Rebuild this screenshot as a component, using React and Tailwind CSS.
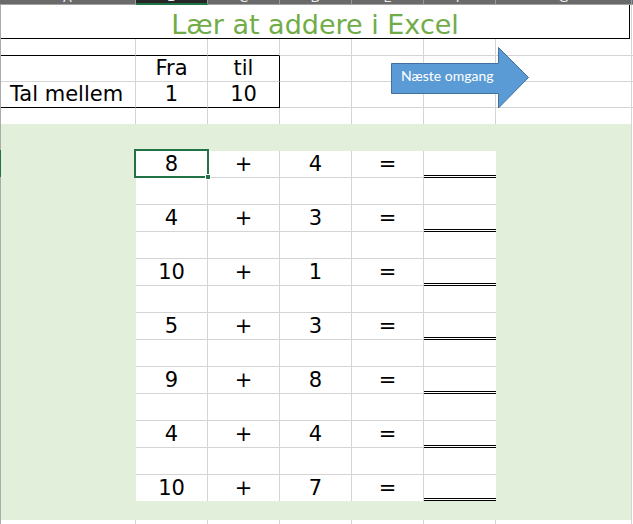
const problems = [
  [8, 4],
  [4, 3],
  [10, 1],
  [5, 3],
  [9, 8],
  [4, 4],
  [10, 7],
];

const headerCols = [
  { letter: 'A', width: 'w-[136px]' },
  { letter: 'B', width: 'w-[72px]', active: true },
  { letter: 'C', width: 'w-[72px]' },
  { letter: 'D', width: 'w-[72px]' },
  { letter: 'E', width: 'w-[72px]' },
  { letter: 'F', width: 'w-[72px]' },
  { letter: 'G', width: 'w-[136px]' },
];

function ColumnHeader() {
  return (
    <div className="flex h-[5px] overflow-hidden bg-[#6a6a6a]">
      {headerCols.map((c) => (
        <div
          key={c.letter}
          className={`flex shrink-0 items-end justify-center overflow-hidden border-r border-[#999] ${c.width} ${
            c.active ? 'border-b-2 border-b-[#217346] bg-[#262626]' : 'border-b border-b-[#a3a3a3]'
          }`}
        >
          <span className="text-[13px] leading-none text-[#ececec]">{c.letter}</span>
        </div>
      ))}
      <div className="flex flex-1 items-end justify-center border-b border-b-[#a3a3a3]">
        <span className="text-[13px] leading-none text-[#ececec]">H</span>
      </div>
    </div>
  );
}

// one spreadsheet cell, text sits on the bottom like Excel
function Cell({ children, className = '' }) {
  return (
    <div className={`flex shrink-0 items-end justify-center pb-[2px] text-[21px] leading-none ${className}`}>
      {children}
    </div>
  );
}

function TopRows() {
  return (
    <>
      <div className="flex h-[34px]">
        <div className="flex w-[629px] shrink-0 items-end justify-center border-b border-r border-black text-[27px] leading-none text-[#70ad47]">
          Lær at addere i Excel
        </div>
        <div className="w-[2px] shrink-0 border-r border-[#d4d4d4]" />
      </div>

      <div className="flex h-[17px]">
        <Cell className="w-[135px] border-b border-r border-b-black border-r-[#d4d4d4]" />
        <Cell className="w-[72px] border-b border-r border-b-black border-r-[#d4d4d4]" />
        <Cell className="w-[72px] border-b border-r border-b-black border-r-[#d4d4d4]" />
        <Cell className="w-[72px] border-b border-r border-[#d4d4d4]" />
        <Cell className="w-[72px] border-b border-r border-[#d4d4d4]" />
        <Cell className="w-[72px] border-b border-r border-[#d4d4d4]" />
        <Cell className="w-[136px] border-b border-r border-[#d4d4d4]" />
        <div className="flex-1 border-b border-[#d4d4d4]" />
      </div>

      <div className="flex h-[26px]">
        <Cell className="w-[135px] border-b border-r border-[#d4d4d4]" />
        <Cell className="w-[72px] border-b border-r border-[#d4d4d4]">Fra</Cell>
        <Cell className="w-[72px] border-b border-r border-b-[#d4d4d4] border-r-black">til</Cell>
        <Cell className="w-[72px] border-b border-r border-[#d4d4d4]" />
        <Cell className="w-[72px] border-b border-r border-[#d4d4d4]" />
        <Cell className="w-[72px] border-b border-r border-[#d4d4d4]" />
        <Cell className="w-[136px] border-b border-r border-[#d4d4d4]" />
        <div className="flex-1 border-b border-[#d4d4d4]" />
      </div>

      <div className="flex h-[26px]">
        <Cell className="w-[135px] justify-start border-b border-r border-b-black border-r-[#d4d4d4] pl-[9px]">Tal mellem</Cell>
        <Cell className="w-[72px] border-b border-r border-b-black border-r-[#d4d4d4]">1</Cell>
        <Cell className="w-[72px] border-b border-r border-black">10</Cell>
        <Cell className="w-[72px] border-b border-r border-[#d4d4d4]" />
        <Cell className="w-[72px] border-b border-r border-[#d4d4d4]" />
        <Cell className="w-[72px] border-b border-r border-[#d4d4d4]" />
        <Cell className="w-[136px] border-b border-r border-[#d4d4d4]" />
        <div className="flex-1 border-b border-[#d4d4d4]" />
      </div>

      <div className="flex h-[16px]">
        <Cell className="w-[135px] border-r border-[#d4d4d4]" />
        <Cell className="w-[72px] border-r border-[#d4d4d4]" />
        <Cell className="w-[72px] border-r border-[#d4d4d4]" />
        <Cell className="w-[72px] border-r border-[#d4d4d4]" />
        <Cell className="w-[72px] border-r border-[#d4d4d4]" />
        <Cell className="w-[72px] border-r border-[#d4d4d4]" />
        <Cell className="w-[136px] border-r border-[#d4d4d4]" />
      </div>
    </>
  );
}

function Exercises() {
  return (
    <div className="flex w-[360px] shrink-0 flex-col self-start bg-white">
      {problems.map(([a, b], i) => {
        const last = i === problems.length - 1;
        const line = last ? '' : 'border-b';
        return (
          <div key={i}>
            <div className={`flex ${last ? 'h-[26px]' : 'h-[27px]'}`}>
              <Cell className={`relative w-[72px] border-r border-[#d4d4d4] ${line}`}>
                {a}
                {i === 0 && (
                  <>
                    <div className="absolute left-[-2px] top-[-2px] h-[29px] w-[75px] border-2 border-[#217346]" />
                    <div className="absolute left-[69px] top-[23px] h-[6px] w-[6px] border border-white bg-[#217346]" />
                  </>
                )}
              </Cell>
              <Cell className={`w-[72px] border-r border-[#d4d4d4] ${line}`}>+</Cell>
              <Cell className={`w-[72px] border-r border-[#d4d4d4] ${line}`}>{b}</Cell>
              <Cell className={`w-[72px] border-r border-[#d4d4d4] ${line}`}>=</Cell>
              <Cell className="w-[72px] border-b-[3px] border-double border-black" />
            </div>
            {!last && (
              <div className="flex h-[27px]">
                <Cell className="w-[72px] border-b border-r border-[#d4d4d4]" />
                <Cell className="w-[72px] border-b border-r border-[#d4d4d4]" />
                <Cell className="w-[72px] border-b border-r border-[#d4d4d4]" />
                <Cell className="w-[72px] border-b border-r border-[#d4d4d4]" />
                <Cell className="w-[72px] border-b border-[#d4d4d4]" />
              </div>
            )}
          </div>
        );
      })}
    </div>
  );
}

function NextRoundArrow() {
  return (
    <div className="absolute left-[389px] top-[41px] h-[64px] w-[140px]">
      <svg className="absolute inset-0" width="140" height="64" viewBox="0 0 140 64">
        <path
          d="M1.5 17.5 H108.5 V1.5 L138.5 31.5 L108.5 62 V47.5 H1.5 Z"
          fill="#5b9bd5"
          stroke="#41719c"
          strokeWidth="1"
        />
      </svg>
      <div className="relative pl-[11px] pt-[23px] font-['Lato',sans-serif] text-[14px] leading-none text-white">
        Næste omgang
      </div>
    </div>
  );
}

export default function App() {
  return (
    <div className="h-[524px] w-[633px] overflow-hidden bg-white font-['DejaVu_Sans',Verdana,sans-serif] text-black">
      <ColumnHeader />
      <div className="relative border-l border-[#ababab]">
        <TopRows />

        <div className="flex h-[396px]">
          <div className="flex w-[630px] shrink-0 bg-[#e2efda] pt-[27px]">
            <div className="w-[135px] shrink-0" />
            <Exercises />
          </div>
          <div className="w-px shrink-0 bg-[#d4d4d4]" />
        </div>

        <div className="flex h-[10px]">
          <Cell className="w-[135px] border-r border-[#d4d4d4]" />
          <Cell className="w-[72px] border-r border-[#d4d4d4]" />
          <Cell className="w-[72px] border-r border-[#d4d4d4]" />
          <Cell className="w-[72px] border-r border-[#d4d4d4]" />
          <Cell className="w-[72px] border-r border-[#d4d4d4]" />
          <Cell className="w-[72px] border-r border-[#d4d4d4]" />
          <Cell className="w-[136px] border-r border-[#d4d4d4]" />
        </div>

        <NextRoundArrow />
        <div className="absolute left-[-1px] top-[145px] h-[27px] w-px bg-[#217346]" />
      </div>
    </div>
  );
}
